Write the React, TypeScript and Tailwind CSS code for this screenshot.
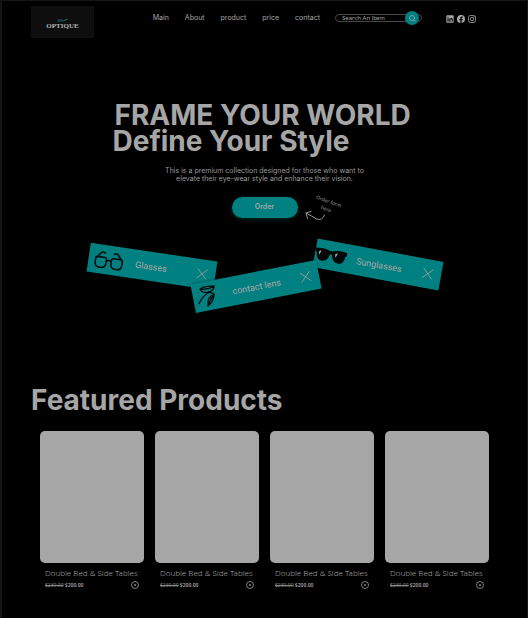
import React from "react";

const links = ["Main", "About", "product", "price", "contact"];
const products = [1, 2, 3, 4];

function Logo() {
  return (
    <a href="#main" className="flex h-8 w-[63px] flex-col items-center justify-center bg-[#0e0e0e] pt-1">
      <svg width="11" height="4" viewBox="0 0 11 4" fill="none" stroke="#1c6b64" strokeWidth="0.8" aria-hidden="true">
        <path d="M1 3c0-2 2-2 2-.5S1 3.500 1 2.500M4 1v2.500M4 2.500c1-1 1.500-.5 1.500.8M6 2c.5 2 1.500 1 1.500 0M8 3V1.500h2.500" />
      </svg>
      <span className="font-['Liberation_Serif',serif] text-[7px] font-bold leading-2 text-[#b5b5b5]">OPTIQUE</span>
    </a>
  );
}

function Socials() {
  return (
    <div className="flex items-center gap-[3px] text-[#a6a6a6]">
      <a href="#linkedin" aria-label="LinkedIn">
        <svg width="8" height="8" viewBox="0 0 24 24" fill="currentColor">
          <path d="M3 1h18a2 2 0 0 1 2 2v18a2 2 0 0 1-2 2H3a2 2 0 0 1-2-2V3a2 2 0 0 1 2-2zm1.500 8.500V20h3.300V9.500zM6.100 4.300a1.900 1.900 0 1 0 0 3.800 1.900 1.900 0 0 0 0-3.800zM10 9.500V20h3.300v-5.500c0-3 3.500-3 3.500 0V20H20v-6.500c0-5-5-5-6.700-2.500V9.500z" fillRule="evenodd" />
        </svg>
      </a>
      <a href="#facebook" aria-label="Facebook">
        <svg width="8" height="8" viewBox="0 0 24 24" fill="currentColor">
          <path d="M24 12a12 12 0 1 0-13.900 11.900v-8.400H7V12h3.100V9.400c0-3 1.800-4.700 4.500-4.700 1.300 0 2.700.2 2.700.2v3h-1.500c-1.500 0-2 .9-2 1.900V12h3.400l-.5 3.500h-2.900v8.400A12 12 0 0 0 24 12z" />
        </svg>
      </a>
      <a href="#instagram" aria-label="Instagram">
        <svg width="8" height="8" viewBox="0 0 24 24" fill="none" stroke="currentColor" strokeWidth="2.500">
          <rect x="1.500" y="1.500" width="21" height="21" rx="6" />
          <circle cx="12" cy="12" r="5" />
          <circle cx="18" cy="6" r="0.800" />
        </svg>
      </a>
    </div>
  );
}

function Header() {
  return (
    <header className="flex items-start pl-[29px] pr-[51px] pt-[5px]">
      <Logo />
      <nav className="ml-auto mr-[15px] mt-[7px] flex gap-4 text-[7px] leading-[10px] text-[#a6a6a6]">
        {links.map((l) => (
          <a key={l} href={"#" + l}>{l}</a>
        ))}
      </nav>
      <form className="mt-[5px] flex h-[14px] w-[87px] items-center" onSubmit={(e) => e.preventDefault()}>
        <div className="flex h-2 w-full items-center rounded-full border border-[#484848] pr-[2px]">
          <input
            aria-label="Search"
            placeholder="Search An Item"
            className="h-2 min-w-0 flex-1 bg-transparent pl-[6px] font-['Noto_Sans',sans-serif] text-[6px] leading-2 text-[#a6a6a6] outline-none placeholder:text-[#a6a6a6]"
          />
          <button aria-label="Submit search" className="flex size-[14px] shrink-0 items-center justify-center rounded-full bg-[#008080]">
            <svg width="7" height="7" viewBox="0 0 14 14" fill="none" stroke="#a6a6a6" strokeWidth="1.500">
              <circle cx="6" cy="6" r="5" />
              <path d="M10 10l3 3" />
            </svg>
          </button>
        </div>
      </form>
      <div className="ml-6 mt-[9px]"><Socials /></div>
    </header>
  );
}

function Cross() {
  return (
    <svg className="shrink-0" width="11" height="11" viewBox="0 0 10 10" stroke="#8e9c9c" strokeWidth="0.8" aria-hidden="true">
      <path d="M0.500 0.500l9 9M9.500 0.500l-9 9" />
    </svg>
  );
}

function GlassesIcon() {
  return (
    <svg width="29" height="18" viewBox="0 0 29 18" fill="none" stroke="#050b0b" strokeWidth="1.600" strokeLinecap="round" aria-hidden="true">
      <path d="M3 6.500h7q2 0 2 2v3.500q0 5-5.500 5T1 12V8.500q0-2 2-2zM19 6.500h7q2 0 2 2v3.500q0 5-5.500 5T17 12V8.500q0-2 2-2zM12 10q2.500-2 5 0M1.500 8L6 2q1-1 4 0M27.500 8l-4.500-6q-1-1-4 0" />
    </svg>
  );
}

function LensIcon() {
  return (
    <svg className="shrink-0 rotate-[11deg]" width="18" height="24" viewBox="0 0 18 24" fill="none" stroke="#050b0b" strokeWidth="1.300" strokeLinecap="round" aria-hidden="true">
      <path d="M3 4.500Q7 1 17 1.500 17 6 11 7.500 5 8.500 3 4.500zM3.500 4.500Q10 5 17 2M11 8Q5 12 2 19M12 8q3-1 5 2M17 10Q10 12 11 21q5-3 6-11zM16.500 11q-4 4-5 10" />
    </svg>
  );
}

function SunglassesIcon() {
  return (
    <svg className="shrink-0" width="32" height="14" viewBox="0 0 32 14" aria-hidden="true">
      <path d="M0 1q8-1.500 13.500.5 2.500 1 5 0Q24-.5 32 1v3l-1.500 1q-.5 8-6 8-6 0-7.500-7.500-1-1.200-2 0Q13.500 13 8 13q-6 0-6.500-8L0 4z" fill="#030606" />
      <path d="M3.500 4.500l2.500-2-1.500 5zM20 4.500l2.500-2-1.500 5z" fill="#b0b0b0" />
    </svg>
  );
}

const ticket = "flex h-[29px] w-32 shrink-0 items-center bg-[#008080] font-[Roboto,sans-serif] text-[9px] leading-3 text-[#a6a6a6]";

function Tickets() {
  return (
    <div className="mt-[27px] flex items-start justify-center">
      <a href="#glasses" className={ticket + " mt-[2px] rotate-[8.500deg] pl-[6px] pr-2"}>
        <GlassesIcon />
        <span className="ml-3 mr-auto">Glasses</span>
        <Cross />
      </a>
      <a href="#lens" className={ticket + " z-10 -ml-6 mt-[22px] -rotate-[11deg] pl-1 pr-2 shadow-[0_0_3px_rgba(0,0,0,0.4)]"}>
        <LensIcon />
        <span className="ml-[18px] mr-auto">contact lens</span>
        <Cross />
      </a>
      <a href="#sunglasses" className={ticket + " -ml-[6px] rotate-[10.500deg] pr-2"}>
        <SunglassesIcon />
        <span className="ml-[10px] mr-auto">Sunglasses</span>
        <Cross />
      </a>
    </div>
  );
}

function Hero() {
  return (
    <section className="pt-[64px]">
      <h1 className="mx-auto w-[304px] whitespace-nowrap text-[28px] font-bold leading-[26px] text-[#a6a6a6]">
        <span className="block pl-[2px]">FRAME YOUR WORLD</span>
        <span className="block">Define Your Style</span>
      </h1>
      <p className="mx-auto mt-[13px] w-[210px] text-center text-[7px] leading-2 text-[#999]">
        This is a premium collection designed for those who want to elevate their eye-wear style and enhance their vision.
      </p>
      <div className="mt-[14px] flex items-start justify-center">
        <div className="w-[52px]" />
        <button className="h-[21px] w-[66px] rounded-full bg-[#008080] text-[7px] font-semibold text-[#a6a6a6] shadow-[0_1px_5px_rgba(0,128,128,0.35)]">Order</button>
        <div className="w-[52px] pl-[7px]">
          <div className="rotate-[20deg] text-center font-['Noto_Sans',sans-serif] text-[5px] leading-[8px] text-[#999]">
            <span className="block">Order form</span>
            <span className="block">here</span>
          </div>
          <svg className="-mt-[2px]" width="21" height="12" viewBox="0 0 21 12" fill="none" stroke="#a6a6a6" strokeWidth="0.900" strokeLinecap="round" aria-hidden="true">
            <path d="M19.500 4q-2 6-8 4Q7 5 1 2M6 0.500L1 2l1.500 5.500" />
          </svg>
        </div>
      </div>
      <Tickets />
    </section>
  );
}

function Product() {
  return (
    <article className="min-w-0">
      <div className="h-[132px] rounded-[5px] bg-[#a6a6a6]" />
      <div className="px-[5px] pt-1 font-['Noto_Sans',sans-serif]">
        <h3 className="whitespace-nowrap text-[8px] font-light leading-3 text-[#a6a6a6]">Double Bed &amp; Side Tables</h3>
        <div className="flex items-center justify-between">
          <p className="text-[5px] leading-3 text-[#a6a6a6]">
            <del className="text-[#888]">$230.00</del> <span className="font-semibold">$200.00</span>
          </p>
          <button aria-label="Add to cart">
            <svg className="block" width="8" height="8" viewBox="0 0 16 16" fill="none" stroke="#a6a6a6" strokeWidth="1.500">
              <circle cx="8" cy="8" r="7" />
              <path d="M8 6v4M6 8h4" />
            </svg>
          </button>
        </div>
      </div>
    </article>
  );
}

export default function App() {
  return (
    <main className="min-h-screen overflow-hidden border-l-2 border-r border-t border-[#151515] bg-black font-[Inter,sans-serif]">
      <Header />
      <Hero />
      <section className="pb-5 pl-[29px] pr-[38px] pt-[83px]">
        <h2 className="text-[28px] font-bold leading-8 text-[#a6a6a6]">Featured Products</h2>
        <div className="mt-[15px] grid grid-cols-4 gap-[11px] pl-[9px]">
          {products.map((p) => (
            <Product key={p} />
          ))}
        </div>
      </section>
    </main>
  );
}
